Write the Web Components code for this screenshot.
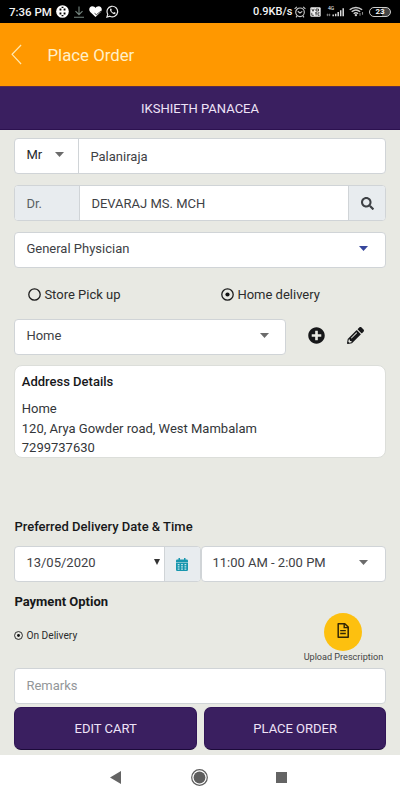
<!DOCTYPE html>
<html lang="en">
<head>
<meta charset="utf-8">
<meta name="viewport" content="width=device-width, initial-scale=1">
<title>Place Order</title>
<style>
  body {
    margin: 0;
    background: #e8e9e3;
    font-family: Roboto, "Liberation Sans", sans-serif;
  }
</style>
</head>
<body>
<order-page></order-page>

<script>
// every glyph used on the page: [viewBox, markup]
const ICONS = {
  wheel: ["0 0 14 14", `<circle cx="7" cy="7" r="6.800" fill="#fff"/><path d="M3.800 3.800h2v2h-2zM8.200 3.800h2v2h-2zM3.800 8.200h2v2h-2zM8.200 8.200h2v2h-2zM6 1.800h2v1.400H6zM6 10.800h2v1.400H6z" fill="#000"/>`],
  download: ["0 0 12 12", `<path d="M6 .5v8M2.500 5.200 6 8.700l3.500-3.500M1 11.200h10" fill="none" stroke="#75857f" stroke-width="1.100"/>`],
  heart: ["0 0 14 12", `<path d="M7 12 1.300 6.500C-.9 4 .6.300 3.500.300 5.200.300 6.400 1.200 7 2.200 7.600 1.200 8.800.300 10.500.300c2.900 0 4.400 3.700 2.200 6.200z" fill="#fff"/><path d="m6 8 2 1.500 5-4" fill="none" stroke="#000" stroke-width=".8"/>`],
  whatsapp: ["0 0 14 14", `<path d="M1 13l.9-3.100A5.700 5.700 0 1 1 4.200 12.100z" fill="none" stroke="#e8e8e8" stroke-width="1.300"/><path d="M5 3.700c-1 .7-.9 2 0 3.400C6.200 9 8 10.100 9.400 9.800c.8-.2 1-.9 1-1.400L8.800 7.600l-.8.8C7 8 6.200 7.200 5.700 6.200l.6-.8-.7-1.700z" fill="#e8e8e8"/>`],
  alarm: ["0 0 12 12", `<g fill="none" stroke="#ccc" stroke-width="1.100"><circle cx="6" cy="6.300" r="4.300"/><path d="M3.800 5.200 6 7l2.300-1.600M.6 2.800 2.900.9M11.400 2.800 9.100.9M3 10l-1 1.300M9 10l1 1.300"/></g>`],
  volte: ["0 0 11 10", `<rect x=".3" y=".3" width="10.400" height="9.400" rx="1.200" fill="#eee"/><path d="m1.800 1.800 1.200 2.500 1.200-2.500M6 2h2.500v2H6zM1.800 5.800v2.500h2M5 5.800h2.200M6.100 5.800v2.600M9.500 5.800H8v2.500h1.500" fill="none" stroke="#000" stroke-width=".7"/>`],
  signal: ["0 0 18 12", `<path d="M7.200 11V9M9.700 11V8M12.200 11V6M14.700 11V4M17.200 11V1.500" stroke="#ddd" stroke-width="1.500"/><path d="M.5 9.500h4M1.500 8v3M3.500 8v3" stroke="#999" stroke-width=".7"/>`],
  wifi: ["0 0 15 12", `<g fill="none" stroke="#ccc" stroke-width="1.500"><path d="M.7 4.200c3.600-3.400 8.800-3.400 12.400 0M2.700 6.300c2.500-2.300 5.900-2.300 8.400 0M4.700 8.400c1.300-1.200 3.100-1.200 4.400 0"/></g><circle cx="6.900" cy="10" r="1.200" fill="#ccc"/><path d="M11 10.500V7.500M13.500 6.500v3" stroke="#888" stroke-width="1.100"/>`],
  back: ["0 0 12 22", `<path d="M11 1 1.200 10.800l9.800 10.200" fill="none" stroke="#ffe9b0" stroke-width="1.300"/>`],
  caret: ["0 0 10 5", `<path d="M0 0h10L5 5z" fill="currentColor"/>`],
  search: ["0 0 512 512", `<path fill="currentColor" d="M505 442.700 405.300 343c-4.500-4.500-10.600-7-17-7H372c27.600-35.300 44-79.700 44-128C416 93.100 322.900 0 208 0S0 93.100 0 208s93.100 208 208 208c48.300 0 92.700-16.400 128-44v16.300c0 6.400 2.500 12.500 7 17l99.700 99.700c9.400 9.400 24.600 9.400 33.900 0l28.300-28.300c9.400-9.400 9.400-24.600.1-34zM208 336c-70.700 0-128-57.200-128-128 0-70.700 57.200-128 128-128 70.700 0 128 57.200 128 128 0 70.700-57.200 128-128 128z"/>`],
  plus: ["0 0 512 512", `<path fill="currentColor" d="M256 8C119 8 8 119 8 256s111 248 248 248 248-111 248-248S393 8 256 8zm144 276c0 6.600-5.400 12-12 12h-92v92c0 6.600-5.400 12-12 12h-56c-6.600 0-12-5.400-12-12v-92h-92c-6.600 0-12-5.400-12-12v-56c0-6.600 5.400-12 12-12h92v-92c0-6.600 5.400-12 12-12h56c6.600 0 12 5.400 12 12v92h92c6.600 0 12 5.400 12 12v56z"/>`],
  pencil: ["0 0 512 512", `<path fill="currentColor" d="M497.900 142.100l-46.100 46.100c-4.700 4.700-12.300 4.700-17 0l-111-111c-4.700-4.700-4.700-12.300 0-17l46.100-46.100c18.700-18.700 49.100-18.700 67.900 0l60.100 60.100c18.800 18.700 18.800 49.100 0 67.900zM284.200 99.800L21.600 362.400.4 483.900c-2.900 16.400 11.400 30.600 27.800 27.800l121.500-21.300 262.600-262.600c4.700-4.700 4.700-12.300 0-17l-111-111c-4.800-4.700-12.400-4.700-17.100 0zM124.100 339.900c-5.500-5.500-5.500-14.300 0-19.800l154-154c5.500-5.500 14.300-5.500 19.800 0s5.500 14.300 0 19.800l-154 154c-5.500 5.500-14.300 5.500-19.800 0zM88 424h48v36.300l-64.500 11.300-31.100-31.100L51.700 376H88v48z"/>`],
  calendar: ["0 0 12 13", `<path d="M1.200 1.500h9.600Q12 1.500 12 2.700V4H0V2.700Q0 1.500 1.200 1.500zM2.500 0h1.500v2.500H2.500zM8 0h1.500v2.500H8zM0 4.600h12v7.200q0 1.200-1.200 1.200H1.200Q0 13 0 11.800z" fill="currentColor"/><path d="M1.700 5.900h1.800v1.300H1.700zM5.100 5.900h1.800v1.300H5.100zM8.500 5.900h1.800v1.300H8.500zM1.700 8.300h1.800v1.300H1.700zM5.100 8.300h1.800v1.300H5.100zM8.500 8.300h1.800v1.300H8.500zM1.700 10.600h1.800v1.200H1.700zM5.100 10.600h1.800v1.200H5.100zM8.500 10.600h1.800v1.200H8.500z" fill="#c3e6ec"/>`],
  file: ["0 0 12 16", `<path d="M1.200.8h6.600l3.400 3.400v11H1.200z" fill="none" stroke="currentColor" stroke-width="1.500" stroke-linejoin="round"/><path d="M7.200 1v3.900h4M3.200 8.200h5.600M3.200 11.200h5.600" fill="none" stroke="currentColor" stroke-width="1.400"/>`],
  navback: ["0 0 11 13", `<path d="M0 6.500 11 0v13z" fill="#646464"/>`],
  navhome: ["0 0 17 17", `<circle cx="8.500" cy="8.500" r="7.800" fill="none" stroke="#5e5e5e" stroke-width="1.200"/><circle cx="8.500" cy="8.500" r="5.900" fill="#5e5e5e"/>`],
  navrecent: ["0 0 11 11", `<path d="M0 0h11v11H0z" fill="#646464"/>`]
};

class UiIcon extends HTMLElement {
  connectedCallback() {
    const [box, body] = ICONS[this.getAttribute("name")];
    this.attachShadow({ mode: "open" }).innerHTML = `
      <style>
        :host { display: block; flex: none; }
        svg { display: block; width: 100%; height: 100%; }
      </style>
      <svg viewBox="${box}" preserveAspectRatio="none" aria-hidden="true">${body}</svg>`;
  }
}
customElements.define("ui-icon", UiIcon);

// helper for the elements that only have static markup
function define(tag, html) {
  const template = document.createElement("template");
  template.innerHTML = html;
  customElements.define(tag, class extends HTMLElement {
    constructor() {
      super();
      this.attachShadow({ mode: "open" }).appendChild(template.content.cloneNode(true));
    }
  });
}

define("status-bar", `
<style>
  :host { display: flex; align-items: center; justify-content: space-between; height: 23px;
    box-sizing: border-box; padding: 0 9px; background: #000; color: #f4f4f4; }
  div { display: flex; align-items: center; }
  .time { font-size: 11.500px; font-weight: 500; width: 46px; white-space: nowrap; }
  .rate { font-size: 11px; font-weight: 500; width: 41px; white-space: nowrap; }
  .net { display: grid; }
  .net span { font-size: 5px; line-height: 5px; height: 3px; padding-left: 2px; }
  .battery { box-sizing: border-box; width: 22px; height: 10px; border: 1px solid #ccc; border-radius: 5px;
    background: linear-gradient(90deg, #000 0 60%, #444 60%);
    font-size: 8px; font-weight: 700; line-height: 8px; text-align: center; }
</style>
<div>
  <span class="time">7:36 PM</span>
  <ui-icon name="wheel" style="width:13px;height:13px;margin-left:1px"></ui-icon>
  <ui-icon name="download" style="width:12px;height:12px;margin-left:4px"></ui-icon>
  <ui-icon name="heart" style="width:13px;height:11px;margin-left:4px"></ui-icon>
  <ui-icon name="whatsapp" style="width:13px;height:13px;margin-left:4px"></ui-icon>
</div>
<div>
  <span class="rate">0.9KB/s</span>
  <ui-icon name="alarm" style="width:12px;height:12px"></ui-icon>
  <ui-icon name="volte" style="width:11px;height:10px;margin-left:4px"></ui-icon>
  <div class="net" style="margin-left:5px"><span>4G</span><ui-icon name="signal" style="width:18px;height:10px;margin-top:-2px"></ui-icon></div>
  <ui-icon name="wifi" style="width:15px;height:11px;margin:0 5px"></ui-icon>
  <span class="battery">23</span>
</div>`);

define("app-header", `
<style>
  :host { display: flex; align-items: center; height: 63px; background: #ff9800; color: #fff0c8;
    box-sizing: border-box; padding: 0 11px 0; font-size: 16.800px; }
  ui-icon { width: 11px; height: 21px; margin-right: 25.500px; }
</style>
<ui-icon name="back"></ui-icon><slot></slot>`);

define("title-band", `
<style>
  :host { display: flex; align-items: center; justify-content: center; height: 44px; box-sizing: border-box;
    background: #3a1f60; border-top: 1px solid #5c2c49; border-bottom: 1px solid #2c1150;
    color: #eee3f7; font-size: 13px; }
</style>
<slot></slot>`);

// white bordered box; cells inside are split by vertical lines
define("field-group", `
<style>
  :host { display: flex; height: 36px; box-sizing: border-box; background: #fff; overflow: hidden;
    border: 1px solid #d0d4d7; border-radius: 4px; color: #3e4145; font-size: 13px; }
  ::slotted(*) { border-left: 1px solid #d0d4d7; }
  ::slotted(:first-child) { border-left: 0; }
</style>
<slot></slot>`);

define("field-cell", `
<style>
  :host { display: flex; align-items: center; box-sizing: border-box; padding: 0 11px; white-space: nowrap; }
  :host([grow]) { flex: 1; }
  :host([addon]) { background: #e8ecef; justify-content: center; padding: 0; }
  :host([select]) { justify-content: space-between; padding-bottom: 4px; padding-right: 17px; }
</style>
<slot></slot>`);

class RadioOption extends HTMLElement {
  connectedCallback() {
    this.attachShadow({ mode: "open" }).innerHTML = `
      <style>
        :host { display: flex; align-items: center; font-size: 13px; color: #2b2c2c; white-space: nowrap; }
        svg { width: var(--dot, 13px); height: var(--dot, 13px); margin-right: 3px; }
        .dot { display: none; }
        :host([checked]) .dot { display: inline; }
      </style>
      <svg viewBox="0 0 13 13"><circle cx="6.500" cy="6.500" r="5.700" fill="none" stroke="#1c1c1c" stroke-width="1.300"/><circle class="dot" cx="6.500" cy="6.500" r="2.100" fill="#111"/></svg><slot></slot>`;
  }
}
customElements.define("radio-option", RadioOption);

define("address-card", `
<style>
  :host { display: block; height: 93px; box-sizing: border-box; padding: 6px 7px 6px 6.400px; background: #fff;
    border: 1px solid #dcdeda; border-radius: 8px; font-size: 13px; line-height: 19.300px; color: #333639; }
  h4 { margin: 0 0 8px; font-size: 13px; font-weight: 500; color: #17181a; }
</style>
<h4><slot name="title"></slot></h4>
<slot></slot>`);

define("upload-button", `
<style>
  :host { display: flex; flex-direction: column; align-items: center; width: 82px; font-size: 9.100px; color: #444; white-space: nowrap; }
  span { display: grid; place-items: center; width: 38px; height: 38px; margin-bottom: 1px; border-radius: 50%;
    background: #fdc00f; color: #332605; box-sizing: border-box; padding-bottom: 4px; }
  ui-icon { width: 12px; height: 15px; }
</style>
<span><ui-icon name="file"></ui-icon></span>
<slot></slot>`);

define("action-button", `
<style>
  :host { display: flex; align-items: center; justify-content: center; flex: 1; height: 43px; box-sizing: border-box;
    background: #3a1f60; border: 1px solid #311557; border-bottom-color: #1c0a3a; border-radius: 7px;
    color: #eee3f7; font-size: 13px; }
</style>
<slot></slot>`);

define("nav-bar", `
<style>
  :host { display: flex; align-items: center; justify-content: center; height: 45px; background: #fff;
    box-sizing: border-box; padding-right: 3px; }
</style>
<ui-icon name="navback" style="width:11px;height:13px"></ui-icon>
<ui-icon name="navhome" style="width:17px;height:17px;margin:0 68px 0 70px"></ui-icon>
<ui-icon name="navrecent" style="width:11px;height:11px"></ui-icon>`);

define("order-page", `
<style>
  :host { display: flex; flex-direction: column; width: 400px; height: 800px; overflow: hidden; background: #e8e9e3; }
  main { flex: 1; padding: 8px 13.600px 0 14.400px; }
  .row { display: flex; align-items: center; }
  h3 { margin: 0; font-size: 13px; line-height: 16px; font-weight: 500; color: #17181a; }
  .caret { width: 9px; height: 5px; color: #6b6b6b; }
  .dark { color: #17181a; }
</style>
<status-bar></status-bar>
<app-header>Place Order</app-header>
<title-band>IKSHIETH PANACEA</title-band>
<main>
  <field-group>
    <field-cell select style="width:63px;padding-right:14px;color:#26282a">Mr<ui-icon class="caret" name="caret"></ui-icon></field-cell>
    <field-cell grow>Palaniraja</field-cell>
  </field-group>
  <field-group style="margin-top:11px">
    <field-cell addon style="width:64px;justify-content:flex-start;padding-left:11px;color:#5a5f64">Dr.</field-cell>
    <field-cell grow>DEVARAJ MS. MCH</field-cell>
    <field-cell addon style="width:37px"><ui-icon name="search" style="width:13px;height:13px"></ui-icon></field-cell>
  </field-group>
  <field-group style="margin-top:11px">
    <field-cell select grow>General Physician<ui-icon class="caret" name="caret" style="color:#36469c"></ui-icon></field-cell>
  </field-group>
  <div class="row" style="height:51px;padding-top:1px;box-sizing:border-box">
    <radio-option style="width:193px;margin-left:14px">Store Pick up</radio-option>
    <radio-option checked>Home delivery</radio-option>
  </div>
  <div class="row dark">
    <field-group style="width:272px">
      <field-cell select grow style="padding-right:16px">Home<ui-icon class="caret" name="caret"></ui-icon></field-cell>
    </field-group>
    <ui-icon name="plus" style="width:17px;height:17px;margin:-3px 0 0 22px"></ui-icon>
    <ui-icon name="pencil" style="width:17px;height:17px;margin:-3px 0 0 22px"></ui-icon>
  </div>
  <address-card style="margin-top:10px">
    <span slot="title">Address Details</span>
    <div>Home</div>
    <div>120, Arya Gowder road, West Mambalam</div>
    <div>7299737630</div>
  </address-card>
  <h3 style="margin-top:61px">Preferred Delivery Date &amp; Time</h3>
  <div class="row" style="margin-top:11px">
    <field-group style="width:186.500px">
      <field-cell select grow style="padding-right:4px">13/05/2020<ui-icon name="caret" style="width:6px;height:6px;color:#333"></ui-icon></field-cell>
      <field-cell addon style="width:36px;color:#1796ae"><ui-icon name="calendar" style="width:12px;height:13px"></ui-icon></field-cell>
    </field-group>
    <field-group style="flex:1">
      <field-cell select grow style="padding-left:10.500px">11:00 AM - 2:00 PM<ui-icon class="caret" name="caret"></ui-icon></field-cell>
    </field-group>
  </div>
  <h3 style="margin-top:12px;font-weight:700">Payment Option</h3>
  <div class="row" style="height:58px;justify-content:space-between;align-items:flex-start">
    <radio-option checked style="--dot:9px;font-size:10.200px;margin-top:20px">On Delivery</radio-option>
    <upload-button style="margin:3px 2px 0 0">Upload Prescription</upload-button>
  </div>
  <field-group>
    <field-cell grow style="color:#939699;padding-bottom:1px">Remarks</field-cell>
  </field-group>
  <div class="row" style="margin-top:3px;gap:7px">
    <action-button>EDIT CART</action-button>
    <action-button>PLACE ORDER</action-button>
  </div>
</main>
<nav-bar></nav-bar>`);
</script>
</body>
</html>
